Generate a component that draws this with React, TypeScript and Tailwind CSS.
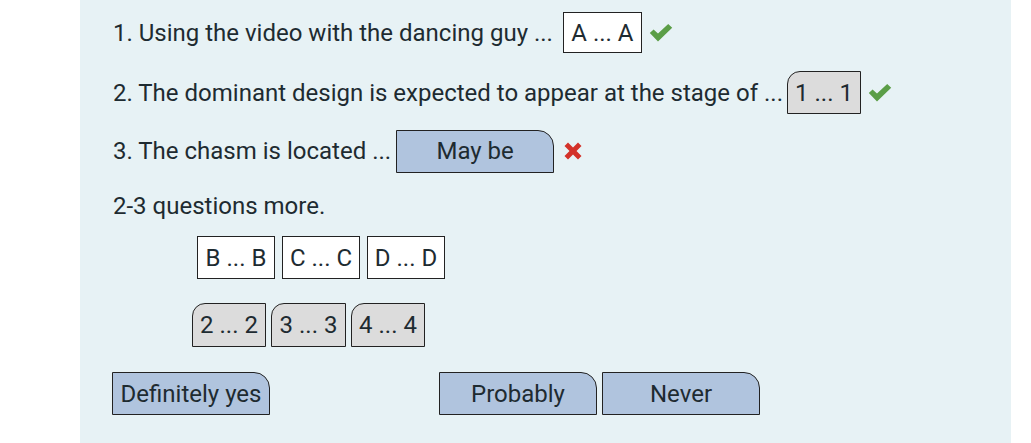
import React from "react";

const Check = () => (
  <svg width="24" height="18" viewBox="0 0 24 18" className="ml-[7px]">
    <path d="M0.8 9 L4.6 5.4 L9 9.6 L19.2 0 L23.2 3.8 L9 17.4 Z" fill="#5b9e47" />
  </svg>
);

const Cross = () => (
  <svg width="20" height="20" viewBox="0 0 20 20" className="ml-[9px]">
    <path d="M1.5 5 L5 1.5 L10 6.5 L15 1.5 L18.5 5 L13.5 10 L18.5 15 L15 18.5 L10 13.5 L5 18.5 L1.5 15 L6.5 10 Z" fill="#d3322a" />
  </svg>
);

const WhiteBox = ({ children, className = "" }: { children: React.ReactNode; className?: string }) => (
  <div className={`h-[41px] flex items-center justify-center whitespace-nowrap bg-white border border-[#222] ${className}`}>
    {children}
  </div>
);

const GrayBox = ({ children, className = "" }: { children: React.ReactNode; className?: string }) => (
  <div className={`h-[43px] flex items-center justify-center whitespace-nowrap bg-[#dcdcdc] border border-[#222] rounded-tl-[13px] ${className}`}>
    {children}
  </div>
);

const BlueBtn = ({ children, className = "" }: { children: React.ReactNode; className?: string }) => (
  <div className={`h-[43px] w-[158px] flex items-center justify-center whitespace-nowrap bg-[#b0c4de] border border-[#222] rounded-tr-[16px] ${className}`}>
    {children}
  </div>
);

export default function App() {
  return (
    <div className="w-[1031px] h-[443px] bg-white flex">
      <div
        className="ml-[80px] w-[931px] h-[443px] bg-[#e7f2f5] text-[#1e2b31] text-[24px] pl-[33px] pt-[12px] whitespace-nowrap"
        style={{ fontFamily: "Roboto, 'Liberation Sans', sans-serif" }}
      >
        <div className="flex items-center h-[41px]">
          <span>1. Using the video with the dancing guy ...</span>
          <WhiteBox className="ml-[10px] w-[79px]">A ... A</WhiteBox>
          <Check />
        </div>
        <div className="flex items-center h-[43px] mt-[18px]">
          <span>2. The dominant design is expected to appear at the stage of ...</span>
          <GrayBox className="ml-[4px] w-[74px]">1 ... 1</GrayBox>
          <Check />
        </div>
        <div className="flex items-center h-[44px] mt-[15px]">
          <span>3. The chasm is located ...</span>
          <BlueBtn className="ml-[5px] w-[157px]">May be</BlueBtn>
          <Cross />
        </div>
        <div className="flex items-center h-[30px] mt-[18px]">
          <span>2-3 questions more.</span>
        </div>
        <div className="flex gap-[7px] mt-[15px] ml-[84px]">
          <WhiteBox className="w-[78px] h-[43px]">B ... B</WhiteBox>
          <WhiteBox className="w-[78px] h-[43px]">C ... C</WhiteBox>
          <WhiteBox className="w-[78px] h-[43px]">D ... D</WhiteBox>
        </div>
        <div className="flex gap-[5px] mt-[24px] ml-[79px]">
          <GrayBox className="w-[74px] h-[44px]">2 ... 2</GrayBox>
          <GrayBox className="w-[75px] h-[44px]">3 ... 3</GrayBox>
          <GrayBox className="w-[74px] h-[44px]">4 ... 4</GrayBox>
        </div>
        <div className="flex mt-[25px] -ml-[1px]">
          <BlueBtn>Definitely yes</BlueBtn>
          <BlueBtn className="ml-[169px]">Probably</BlueBtn>
          <BlueBtn className="ml-[5px]">Never</BlueBtn>
        </div>
      </div>
    </div>
  );
}
